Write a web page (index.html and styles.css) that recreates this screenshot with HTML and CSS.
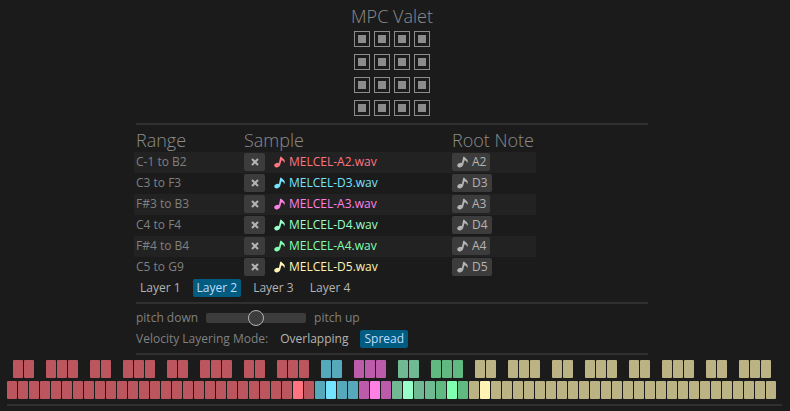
FILE: index.html
```html
<!DOCTYPE html>
<html lang="en">
<head>
<meta charset="utf-8">
<title>MPC Valet</title>
<link rel="stylesheet" href="styles.css">
</head>
<body>
<svg class="defs" aria-hidden="true">
  <symbol id="note" viewBox="0 0 12 12">
    <ellipse cx="3.1" cy="9.2" rx="2.9" ry="2.2" transform="rotate(-18 3.1 9.2)"/>
    <path d="M4.5 9 L6.2 0.8 H7.4 C7.9 2.4 11.6 3 10.7 6.6 H9.8 C9.9 5.2 8.8 4.6 7.4 4.6 L6 9.4 Z"/>
  </symbol>
  <symbol id="cross" viewBox="0 0 8 8">
    <path d="M1 1 L7 7 M7 1 L1 7" fill="none" stroke="currentColor" stroke-width="2"/>
  </symbol>
</svg>
<main class="app">
  <div class="column">
    <h1 class="title">MPC Valet</h1>
    <div class="pads" id="pads"></div>
    <hr class="rule">
    <table class="samples">
      <thead><tr><th class="range">Range</th><th class="sample">Sample</th><th class="root">Root Note</th></tr></thead>
      <tbody id="rows"></tbody>
    </table>
    <div class="bar layers">
      <button class="option">Layer 1</button>
      <button class="option selected">Layer 2</button>
      <button class="option">Layer 3</button>
      <button class="option">Layer 4</button>
    </div>
    <hr class="rule">
    <div class="bar">
      <label for="pitch">pitch down</label>
      <input class="slider" id="pitch" type="range" min="-1" max="1" step="0.01" value="0">
      <label for="pitch">pitch up</label>
    </div>
    <div class="bar modes">
      <span>Velocity Layering Mode:</span>
      <button class="option">Overlapping</button>
      <button class="option selected">Spread</button>
    </div>
    <hr class="rule">
  </div>
  <div class="keyboard">
    <div class="keys black" id="black"></div>
    <div class="keys" id="white"></div>
  </div>
  <hr class="rule">
</main>
<script src="app.js"></script>
</body>
</html>
```
FILE: app.js
```js
const zones = [
  { range: "C-1 to B2", root: "A2", color: "red", white: 28, black: 28 },
  { range: "C3 to F3", root: "D3", color: "cyan", white: 32, black: 31 },
  { range: "F#3 to B3", root: "A3", color: "pink", white: 35, black: 35 },
  { range: "C4 to F4", root: "D4", color: "mint", white: 39, black: 38 },
  { range: "F#4 to B4", root: "A4", color: "green", white: 42, black: 42 },
  { range: "C5 to G9", root: "D5", color: "sand", white: 70, black: 70 }
];
const names = ["C", "D", "E", "F", "G", "A", "B"];
const note = '<svg class="note" aria-hidden="true"><use href="#note"/></svg>';

document.getElementById("pads").innerHTML = Array.from({ length: 16 }, (_, i) =>
  `<button class="pad" aria-label="Pad ${i + 1}"></button>`).join("");

document.getElementById("rows").innerHTML = zones.map(z => `
  <tr>
    <td>${z.range}</td>
    <td><div class="cell">
      <button class="button remove" aria-label="Remove"><svg class="cross"><use href="#cross"/></svg></button>
      <span class="file ${z.color}">${note}MELCEL-${z.root}.wav</span>
    </div></td>
    <td><button class="button">${note}${z.root}</button></td>
  </tr>`).join("");

let white = "";
let black = "";
for (let i = 0; i < 70; i++) {
  const name = names[i % 7];
  const octave = Math.floor(i / 7) - 1;
  const zone = zones.find(z => i < z.white);
  const lit = zone.root === name + octave ? " lit" : "";
  white += `<button class="key ${zone.color}${lit}" aria-label="${name}${octave}"></button>`;
  black += name === "E" || name === "B"
    ? "<i></i>"
    : `<button class="key ${zones.find(z => i < z.black).color}" aria-label="${name}#${octave}"></button>`;
}
document.getElementById("white").innerHTML = white;
document.getElementById("black").innerHTML = black;
```
FILE: styles.css
```css
* { box-sizing: border-box; }

body {
  margin: 0;
  background: #1b1b1b;
  color: #808080;
  font: 400 12px/18px "Open Sans", "Noto Sans", sans-serif;
}

button {
  margin: 0;
  padding: 0;
  border: 0;
  background: none;
  color: inherit;
  font: inherit;
}

.defs { position: absolute; width: 0; height: 0; }

.app { padding: 6px 8px 5px 7px; }

.column {
  max-width: 517px;
  margin: 0 auto;
  padding-right: 5px;
}

.rule {
  height: 2px;
  margin: 5px 0;
  border: 0;
  background: #303030;
}

.title {
  margin: 0 0 5px;
  color: #8c8c8c;
  font-size: 18px;
  line-height: 20px;
  font-weight: 300;
  text-align: center;
}

.pads {
  display: grid;
  grid-template-columns: repeat(4, 16px);
  gap: 7px 4px;
  justify-content: center;
  margin-bottom: 7px;
}

.pad {
  height: 16px;
  border: 1px solid #8c8c8c;
  padding: 3px;
  background: #8c8c8c content-box;
}

.samples {
  width: 402px;
  margin: -5px 0 1px -2px;
  border-collapse: collapse;
  table-layout: fixed;
}

.samples th {
  height: 27px;
  padding: 3px 0 0;
  color: #8c8c8c;
  font-size: 18px;
  line-height: 24px;
  font-weight: 300;
  text-align: left;
}

.samples .range { width: 110px; padding-left: 2px; }
.samples .sample { width: 208px; }

.samples td { height: 21px; padding: 1px 0 2px; }
.samples td:first-child { padding-left: 2px; }
.samples tbody tr:nth-child(odd) { background: #222; }

.cell { display: flex; gap: 9px; }

.button {
  display: flex;
  align-items: center;
  gap: 3px;
  height: 18px;
  padding: 0 4px 0 5px;
  border-radius: 2px;
  background: #3c3c3c;
  color: #b4b4b4;
}

.remove { justify-content: center; width: 21px; padding: 0; }
.cross { width: 8px; height: 8px; }
.note { width: 12px; height: 12px; fill: currentColor; }

.file { display: flex; align-items: center; gap: 3px; color: var(--lit); }

.bar { display: flex; align-items: center; gap: 8px; height: 18px; }
.modes { margin-top: 3px; }

.option { padding: 0 4px; border-radius: 2px; color: #b4b4b4; }
.selected { background: #005c80; color: #c0deff; }

.slider {
  appearance: none;
  width: 100px;
  height: 10px;
  margin: 0;
  border-radius: 2px;
  background: #3c3c3c;
}

.slider::-webkit-slider-thumb {
  appearance: none;
  width: 16px;
  height: 16px;
  border: 1px solid #b4b4b4;
  border-radius: 50%;
  background: #3c3c3c;
}

.keyboard { display: grid; gap: 3px; }

.keys { display: grid; grid-template-columns: repeat(70, 10px); gap: 1px; }
.black { padding-left: 6px; }

.key { height: 18px; border-radius: 1px; background: var(--dim); }
.lit { background: var(--lit); }

.red { --lit: #ff7480; --dim: #bb565f; }
.cyan { --lit: #74e3ff; --dim: #56a8bb; }
.pink { --lit: #ff80e5; --dim: #bb5ba9; }
.mint { --lit: #98ffc9; --dim: #6fba93; }
.green { --lit: #80ffb0; --dim: #5fb981; }
.sand { --lit: #fff3b6; --dim: #bbb384; }
```
